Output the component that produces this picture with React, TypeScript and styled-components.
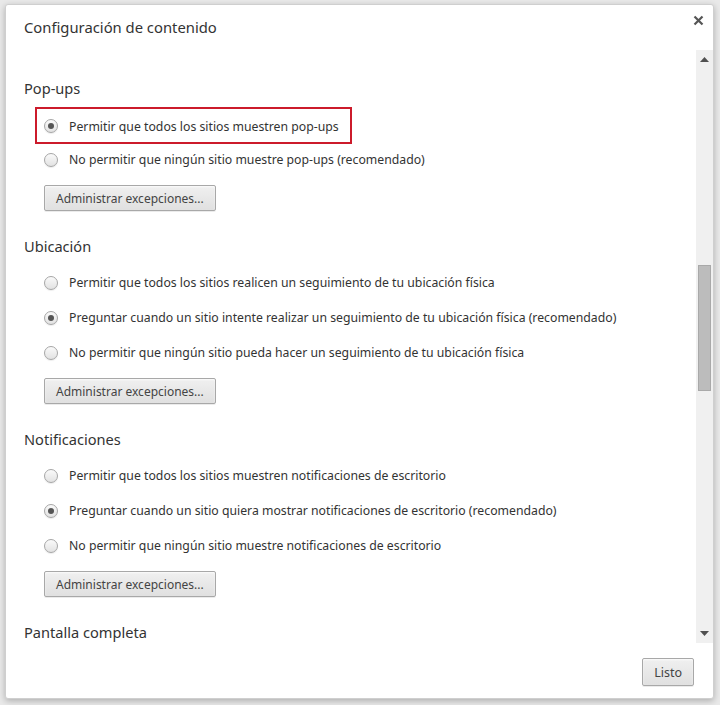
import React from "react";
import styled, { createGlobalStyle } from "styled-components";

const Global = createGlobalStyle`
  html, body { margin: 0; padding: 0; }
  body {
    background: #e9e9e9;
    font-family: "Noto Sans", "Open Sans", "Liberation Sans", sans-serif;
    color: #333;
  }
`;

const Page = styled.div`
  padding: 4px 0 0 5px;
  height: 705px;
  box-sizing: border-box;
  overflow: hidden;
`;

const Dialog = styled.div`
  width: 709px;
  height: 695px;
  box-sizing: border-box;
  background: #fff;
  border: 1px solid #cfcfcf;
  border-radius: 3px;
  box-shadow: 0 2px 6px rgba(0, 0, 0, 0.25);
  display: flex;
  flex-direction: column;
  position: relative;
`;

const Header = styled.div`
  height: 45px;
  display: flex;
  align-items: center;
  padding-left: 18px;
  padding-bottom: 1px;
  box-sizing: border-box;
`;

const Title = styled.h1`
  margin: 0;
  font-size: 14.8px;
  font-weight: 400;
  color: #333;
`;

const Close = styled.button`
  position: absolute;
  top: 7px;
  right: 7px;
  width: 16px;
  height: 16px;
  border: 0;
  padding: 0;
  background: transparent;
  display: flex;
  align-items: center;
  justify-content: center;
`;

const Body = styled.div`
  flex: 1;
  display: flex;
  min-height: 0;
`;

const Content = styled.div`
  flex: 1;
  overflow: hidden;
  padding: 28px 0 0 18px;
`;

const Scrollbar = styled.div`
  width: 17px;
  background: #f0f0f0;
  display: flex;
  flex-direction: column;
  align-items: center;
`;

const Arrow = styled.div`
  height: 19px;
  width: 17px;
  display: flex;
  align-items: center;
  justify-content: center;
`;

const Track = styled.div`
  flex: 1;
  width: 100%;
  display: flex;
  flex-direction: column;
  align-items: center;
  padding-top: 196px;
  box-sizing: border-box;
`;

const Thumb = styled.div`
  width: 13px;
  height: 126px;
  box-sizing: border-box;
  background: #bcbcbc;
  border: 1px solid #a9a9a9;
`;

const Section = styled.section`
  margin-bottom: 25px;
`;

const Heading = styled.h2`
  margin: 0 0 9px 0;
  font-size: 14.6px;
  line-height: 20px;
  font-weight: 400;
  color: #333;
`;

const Options = styled.div`
  padding-left: 20px;
  display: flex;
  flex-direction: column;
  align-items: flex-start;
`;

const Row = styled.label<{ $highlight?: boolean }>`
  display: flex;
  align-items: center;
  height: 35px;
  box-sizing: border-box;
  font-size: 12.25px;
  color: #333;
  gap: 11px;
  ${(p) =>
    p.$highlight
      ? `
    border: 2px solid #cc1b2b;
    margin-left: -9px;
    padding: 1px 11px 0 7px;
    height: 37px;
    margin-bottom: -2px;
  `
      : ""}
`;

const Radio = styled.span<{ $checked?: boolean }>`
  width: 14px;
  height: 14px;
  box-sizing: border-box;
  border-radius: 50%;
  border: 1px solid #a6a6a6;
  background: linear-gradient(#fafafa, #e2e2e2);
  box-shadow: 0 1px 1px rgba(0, 0, 0, 0.08);
  display: flex;
  align-items: center;
  justify-content: center;
  flex: none;
  &::after {
    content: "";
    width: 6px;
    height: 6px;
    border-radius: 50%;
    background: ${(p) => (p.$checked ? "#555" : "transparent")};
  }
`;

const Button = styled.button`
  font-family: inherit;
  font-size: 12px;
  color: #444;
  height: 26px;
  padding: 0 11px;
  border: 1px solid #a8a8a8;
  border-radius: 2px;
  background: linear-gradient(#f0f0f0, #e0e0e0);
  box-shadow: 0 1px 0 rgba(0, 0, 0, 0.08), inset 0 1px 2px rgba(255, 255, 255, 0.75);
  margin-top: 8px;
`;

const Footer = styled.div`
  height: 55px;
  display: flex;
  justify-content: flex-end;
  align-items: flex-start;
  padding: 15px 19px 0 0;
  box-sizing: border-box;
`;

const DoneButton = styled(Button)`
  margin-top: 0;
  height: 28px;
  padding: 0 11px;
  font-size: 12.5px;
`;

type Opt = { label: string; checked?: boolean; highlight?: boolean };

const sections: { title: string; options: Opt[] }[] = [
  {
    title: "Pop-ups",
    options: [
      { label: "Permitir que todos los sitios muestren pop-ups", checked: true, highlight: true },
      { label: "No permitir que ningún sitio muestre pop-ups (recomendado)" },
    ],
  },
  {
    title: "Ubicación",
    options: [
      { label: "Permitir que todos los sitios realicen un seguimiento de tu ubicación física" },
      {
        label: "Preguntar cuando un sitio intente realizar un seguimiento de tu ubicación física (recomendado)",
        checked: true,
      },
      { label: "No permitir que ningún sitio pueda hacer un seguimiento de tu ubicación física" },
    ],
  },
  {
    title: "Notificaciones",
    options: [
      { label: "Permitir que todos los sitios muestren notificaciones de escritorio" },
      {
        label: "Preguntar cuando un sitio quiera mostrar notificaciones de escritorio (recomendado)",
        checked: true,
      },
      { label: "No permitir que ningún sitio muestre notificaciones de escritorio" },
    ],
  },
];

export default function App() {
  return (
    <>
      <Global />
      <Page>
        <Dialog>
          <Header>
            <Title>Configuración de contenido</Title>
          </Header>
          <Close aria-label="Cerrar">
            <svg width="11" height="11" viewBox="0 0 11 11">
              <path d="M1.5 1.5 L9.5 9.5 M9.5 1.5 L1.5 9.5" stroke="#555" strokeWidth="2.2" />
            </svg>
          </Close>
          <Body>
            <Content>
              {sections.map((s) => (
                <Section key={s.title}>
                  <Heading>{s.title}</Heading>
                  <Options>
                    {s.options.map((o) => (
                      <Row key={o.label} $highlight={o.highlight}>
                        <Radio $checked={o.checked} />
                        {o.label}
                      </Row>
                    ))}
                    <Button>Administrar excepciones...</Button>
                  </Options>
                </Section>
              ))}
              <Section>
                <Heading>Pantalla completa</Heading>
              </Section>
            </Content>
            <Scrollbar>
              <Arrow>
                <svg width="9" height="5" viewBox="0 0 9 5">
                  <path d="M0 5 L4.5 0 L9 5 Z" fill="#505050" />
                </svg>
              </Arrow>
              <Track>
                <Thumb />
              </Track>
              <Arrow>
                <svg width="9" height="5" viewBox="0 0 9 5">
                  <path d="M0 0 L4.5 5 L9 0 Z" fill="#505050" />
                </svg>
              </Arrow>
            </Scrollbar>
          </Body>
          <Footer>
            <DoneButton>Listo</DoneButton>
          </Footer>
        </Dialog>
      </Page>
    </>
  );
}
